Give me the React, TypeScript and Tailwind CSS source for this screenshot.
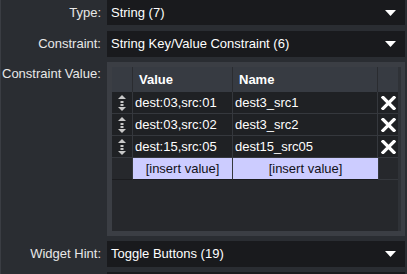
import React from "react";

const font = { fontFamily: '"Liberation Sans", Arial, sans-serif' };

const Arrow = () => (
  <svg width="11" height="6" viewBox="0 0 11 6" className="shrink-0">
    <polygon points="0,0 11,0 5.5,6" fill="#ffffff" />
  </svg>
);

const Handle = () => (
  <svg width="8" height="16" viewBox="0 0 8 16">
    <polygon points="4,0 8,4 0,4" fill="#c8c8c8" />
    <rect x="2.5" y="6" width="3" height="2" fill="#c8c8c8" />
    <rect x="2.5" y="9" width="3" height="2" fill="#c8c8c8" />
    <polygon points="0,12 8,12 4,16" fill="#c8c8c8" />
  </svg>
);

const Cross = () => (
  <svg width="15" height="14" viewBox="0 0 15 14">
    <path d="M2 1.5 L13 12.5 M13 1.5 L2 12.5" stroke="#ffffff" strokeWidth="3.2" strokeLinecap="square" />
  </svg>
);

type Row = { value: string; name: string };

const rows: Row[] = [
  { value: "dest:03,src:01", name: "dest3_src1" },
  { value: "dest:03,src:02", name: "dest3_src2" },
  { value: "dest:15,src:05", name: "dest15_src05" },
];

const Dropdown = ({ text }: { text: string }) => (
  <div className="flex-1 h-[26px] bg-[#191a1d] flex items-center justify-between pl-[4px] pr-[9px] text-white text-[13px]">
    <span>{text}</span>
    <Arrow />
  </div>
);

const Label = ({ text, top }: { text: string; top?: boolean }) => (
  <div
    className={`w-[106px] shrink-0 flex pr-[6px] text-[#e8e8e8] text-[13px] ${
      top ? "justify-start pl-[2px] pt-[2px]" : "justify-end items-center"
    }`}
  >
    {text}
  </div>
);

export default function App() {
  return (
    <div
      style={font}
      className="w-[407px] h-[274px] overflow-hidden bg-[#2a2d32] border-l border-[#3a3d43] flex flex-col"
    >
      <div className="flex h-[25px] mr-[2px]">
        <Label text="Type:" />
        <div className="flex-1 h-[25px] bg-[#191a1d] flex items-center justify-between pl-[4px] pr-[9px] text-white text-[13px]">
          <span>String (7)</span>
          <Arrow />
        </div>
      </div>
      <div className="flex mt-[6px] mr-[2px]">
        <Label text="Constraint:" />
        <Dropdown text="String Key/Value Constraint (6)" />
      </div>
      <div className="flex mt-[5px] mr-[2px]">
        <div className="w-[106px] shrink-0 text-[#e8e8e8] text-[13px] pl-[1px] pt-[2px] whitespace-nowrap">
          Constraint Value:
        </div>
        <div className="flex-1 h-[174px] bg-[#3b3e44] pl-[5px] pr-[4px] pt-[5px] pb-[5px]">
          <div className="h-full bg-[#26282c] border-r-[3px] border-[#2f3237]">
            <div className="grid grid-cols-[21px_100px_145px_1fr] text-[13px]">
              <div className="h-[25px] bg-[#373b42] border-r border-[#2a2c30]" />
              <div className="h-[25px] bg-[#373b42] border-r border-[#2a2c30] flex items-center pl-[6px] font-bold text-white">
                Value
              </div>
              <div className="h-[25px] bg-[#373b42] border-r border-[#2a2c30] flex items-center pl-[6px] font-bold text-white">
                Name
              </div>
              <div className="h-[25px] bg-[#373b42]" />
              {rows.map((r) => (
                <React.Fragment key={r.value}>
                  <div className="h-[22px] bg-[#1f2124] border-b border-[#35383d] border-r border-r-[#35383d] flex items-center justify-center">
                    <Handle />
                  </div>
                  <div className="h-[22px] bg-[#1f2124] border-b border-[#35383d] border-r border-r-[#35383d] flex items-center pl-[2px] text-white whitespace-nowrap overflow-hidden">
                    {r.value}
                  </div>
                  <div className="h-[22px] bg-[#1f2124] border-b border-[#35383d] border-r border-r-[#35383d] flex items-center pl-[2px] text-white">
                    {r.name}
                  </div>
                  <div className="h-[22px] bg-[#1f2124] border-b border-[#35383d] flex items-center justify-center">
                    <Cross />
                  </div>
                </React.Fragment>
              ))}
              <div className="h-[22px] bg-[#26282c] border-b border-[#1b1c1f] border-r border-r-[#35383d]" />
              <div className="h-[22px] bg-[#ccccff] border-b border-[#1b1c1f] border-r border-r-[#35383d] flex items-center justify-center text-[#111118]">
                [insert value]
              </div>
              <div className="h-[22px] bg-[#ccccff] border-b border-[#1b1c1f] flex items-center justify-center text-[#111118]">
                [insert value]
              </div>
              <div className="h-[22px] bg-[#26282c] border-b border-[#1b1c1f] border-l border-[#35383d]" />
            </div>
          </div>
        </div>
      </div>
      <div className="flex mt-[5px] mr-[2px]">
        <Label text="Widget Hint:" />
        <Dropdown text="Toggle Buttons (19)" />
      </div>
      <div className="flex mt-[5px] mr-[2px]">
        <div className="w-[106px] shrink-0" />
        <div className="flex-1 h-[26px] bg-[#191a1d]" />
      </div>
    </div>
  );
}
